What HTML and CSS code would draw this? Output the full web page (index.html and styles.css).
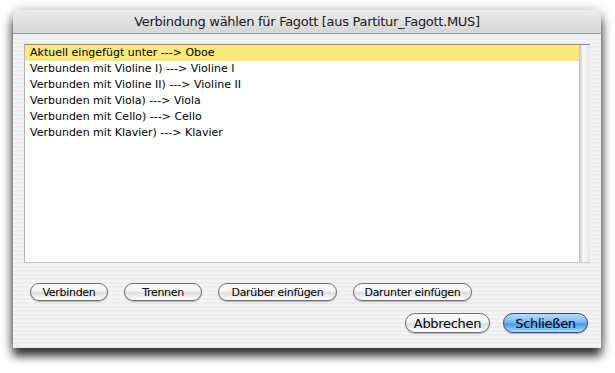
FILE: index.html
```html
<!DOCTYPE html>
<html lang="de">
<head>
    <meta charset="UTF-8">
    <title>Verbindung wählen</title>
    <link rel="stylesheet" href="styles.css">
</head>
<body>
    <div class="window">
        <div class="titlebar">Verbindung wählen für Fagott [aus Partitur_Fagott.MUS]</div>

        <div class="content">
            <div class="listbox">
                <ul class="list">
                    <li class="selected">Aktuell eingefügt unter ---&gt; Oboe</li>
                    <li>Verbunden mit Violine I) ---&gt; Violine I</li>
                    <li>Verbunden mit Violine II) ---&gt; Violine II</li>
                    <li>Verbunden mit Viola) ---&gt; Viola</li>
                    <li>Verbunden mit Cello) ---&gt; Cello</li>
                    <li>Verbunden mit Klavier) ---&gt; Klavier</li>
                </ul>
                <div class="scrolltrack"></div>
            </div>

            <div class="actions">
                <button class="btn small w78">Verbinden</button>
                <button class="btn small w78">Trennen</button>
                <button class="btn small w119">Darüber einfügen</button>
                <button class="btn small w119">Darunter einfügen</button>
            </div>

            <div class="footer">
                <button class="btn">Abbrechen</button>
                <button class="btn default">Schließen</button>
            </div>
        </div>
    </div>
</body>
</html>
```

FILE: styles.css
```css
:root {
    --ui-font: 'DejaVu Sans', 'Noto Sans', sans-serif;
    --highlight: #fbe97b;
}

html,
body {
    height: 100%;
}

body {
    margin: 0;
    padding-top: 10px;
    box-sizing: border-box;
    background: #ffffff;
    font-family: var(--ui-font);
    color: #000;
}

.window {
    width: 588px;
    height: 338px;
    margin-left: 13px;
    border-radius: 7px 7px 0 0;
    display: flex;
    flex-direction: column;
    box-shadow: 0 8px 10px rgba(0, 0, 0, 0.75), 0 2px 14px rgba(0, 0, 0, 0.35);
    overflow: hidden;
}

.titlebar {
    height: 23px;
    line-height: 23px;
    text-align: center;
    font-size: 13px;
    letter-spacing: -0.3px;
    color: #1a1a1a;
    background: linear-gradient(#ececec, #d6d6d6);
    border-bottom: 1px solid #9c9c9c;
}

.content {
    flex: 1;
    display: flex;
    flex-direction: column;
    padding: 10px 11px 0 11px;
    background: repeating-linear-gradient(#ededed 0 2px, #f3f3f3 2px 4px);
}

.listbox {
    height: 217px;
    display: flex;
    border-top: 1px solid #8e8e8e;
    border-left: 1px solid #b4b4b4;
    border-bottom: 1px solid #c8c8c8;
}

.list {
    flex: 1;
    margin: 0;
    padding: 0;
    list-style: none;
    background: #fff;
}

.list li {
    height: 16px;
    line-height: 16px;
    padding-left: 5px;
    font-size: 11px;
}

.list li.selected {
    background: var(--highlight);
}

.scrolltrack {
    width: 11px;
    background: linear-gradient(90deg, #bcbcbc 0, #dedede 2px, #fafafa 4px, #f2f2f2 6px, #e6e6e6 11px);
}

.actions {
    display: flex;
    gap: 16px;
    padding: 20px 0 0 6px;
}

.footer {
    display: flex;
    justify-content: flex-end;
    gap: 13px;
    padding: 12px 0 0 0;
    margin-right: -11px;
    padding-right: 13px;
}

.btn {
    height: 20px;
    width: 85px;
    padding: 0;
    border: 1px solid #6e6e6e;
    border-radius: 10px;
    font-family: var(--ui-font);
    font-size: 13px;
    letter-spacing: -0.3px;
    color: #000;
    background: linear-gradient(#ffffff 0, #f3f3f3 45%, #dedede 55%, #f4f4f4 85%, #ffffff 100%);
    box-shadow: 0 1px 1px rgba(0, 0, 0, 0.25);
}

.btn.small {
    height: 18px;
    font-size: 11px;
    border-radius: 9px;
}

.w78 {
    width: 78px;
}

.w119 {
    width: 119px;
}

.btn.default {
    border-color: #2b4d88;
    background: linear-gradient(#b9dcfa 0, #7fbaf0 45%, #4e9ae6 55%, #7ec4fa 85%, #b8e6ff 100%);
}
```
